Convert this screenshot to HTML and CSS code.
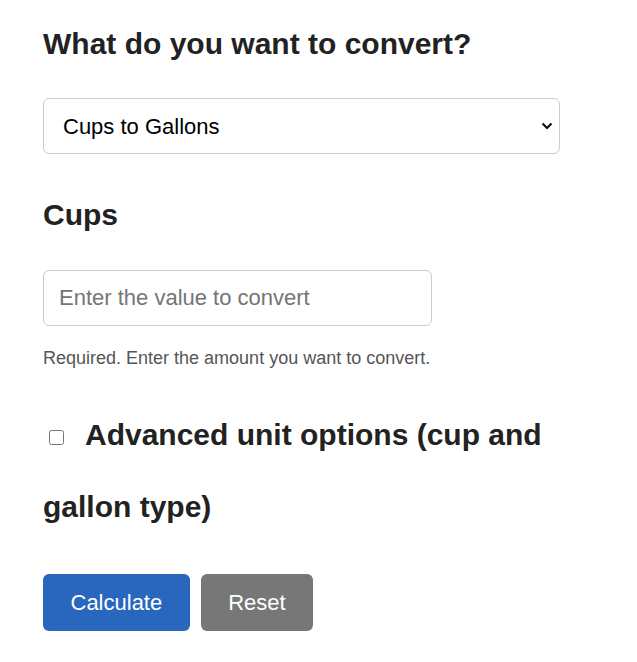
FILE: index.html
```html
<!DOCTYPE html>
<html lang="en">
<head>
  <meta charset="UTF-8">
  <meta name="viewport" content="width=device-width, initial-scale=1.0">
  <title>Cups to Gallons Converter</title>
  <link rel="stylesheet" href="styles.css">
</head>
<body>
  <form class="converter" id="converterForm">
    <h2 class="question">What do you want to convert?</h2>

    <select class="unit-select" id="conversion">
      <option value="cups-gallons">Cups to Gallons</option>
      <option value="gallons-cups">Gallons to Cups</option>
    </select>

    <label class="field-label" for="amount">Cups</label>
    <input type="text" class="value-input" id="amount" placeholder="Enter the value to convert">
    <p class="hint">Required. Enter the amount you want to convert.</p>

    <div class="advanced"><input type="checkbox" class="advanced-check" id="advanced"><label for="advanced">Advanced unit options (cup and gallon type)</label></div>

    <div class="button-group">
      <button type="submit" class="button primary">Calculate</button>
      <button type="reset" class="button secondary">Reset</button>
    </div>
  </form>
</body>
</html>
```

FILE: styles.css
```css
body {
  margin: 0;
  background: #fff;
  color: #222;
  font-family: "Liberation Sans", Arial, sans-serif;
}

.converter {
  width: 517px;
  padding: 26px 0 0 43px;
}

.question,
.field-label {
  display: block;
  margin: 0;
  font-size: 30px;
  font-weight: 700;
  line-height: 36px;
}

.unit-select {
  display: block;
  width: 517px;
  height: 56px;
  margin-top: 36px;
  padding: 0 40px 0 19px;
  border: 1px solid #ccc;
  border-radius: 6px;
  background: #fff url("data:image/svg+xml,%3Csvg xmlns='http://www.w3.org/2000/svg' width='12' height='8' viewBox='0 0 12 8'%3E%3Cpath d='M1.5 1.5l4.5 4.5 4.5-4.5' fill='none' stroke='%23111' stroke-width='2.2'/%3E%3C/svg%3E") no-repeat right 6px center;
  color: #000;
  font-family: inherit;
  font-size: 22px;
  appearance: none;
  -webkit-appearance: none;
  box-sizing: border-box;
}

.field-label {
  margin-top: 43px;
}

.value-input {
  display: block;
  width: 389px;
  height: 56px;
  margin-top: 37px;
  padding: 0 15px;
  border: 1px solid #ccc;
  border-radius: 6px;
  color: #222;
  font-family: inherit;
  font-size: 22px;
  box-sizing: border-box;
}

.value-input::placeholder {
  color: #757575;
}

.hint {
  margin: 20px 0 0;
  font-size: 18px;
  line-height: 24px;
  color: #555;
}

.advanced {
  margin-top: 29px;
  font-size: 30px;
  font-weight: 700;
  line-height: 72px;
}

.advanced-check {
  width: 15px;
  height: 15px;
  margin: 3px 21px 2px 6px;
}

.button-group {
  display: flex;
  gap: 11px;
  margin-top: 31px;
}

.button {
  height: 57px;
  padding: 0 27.5px;
  border: none;
  border-radius: 6px;
  color: #fff;
  font-family: inherit;
  font-size: 22px;
  cursor: pointer;
}

.button.primary {
  background: #2966be;
}

.button.secondary {
  background: #777;
}
```
